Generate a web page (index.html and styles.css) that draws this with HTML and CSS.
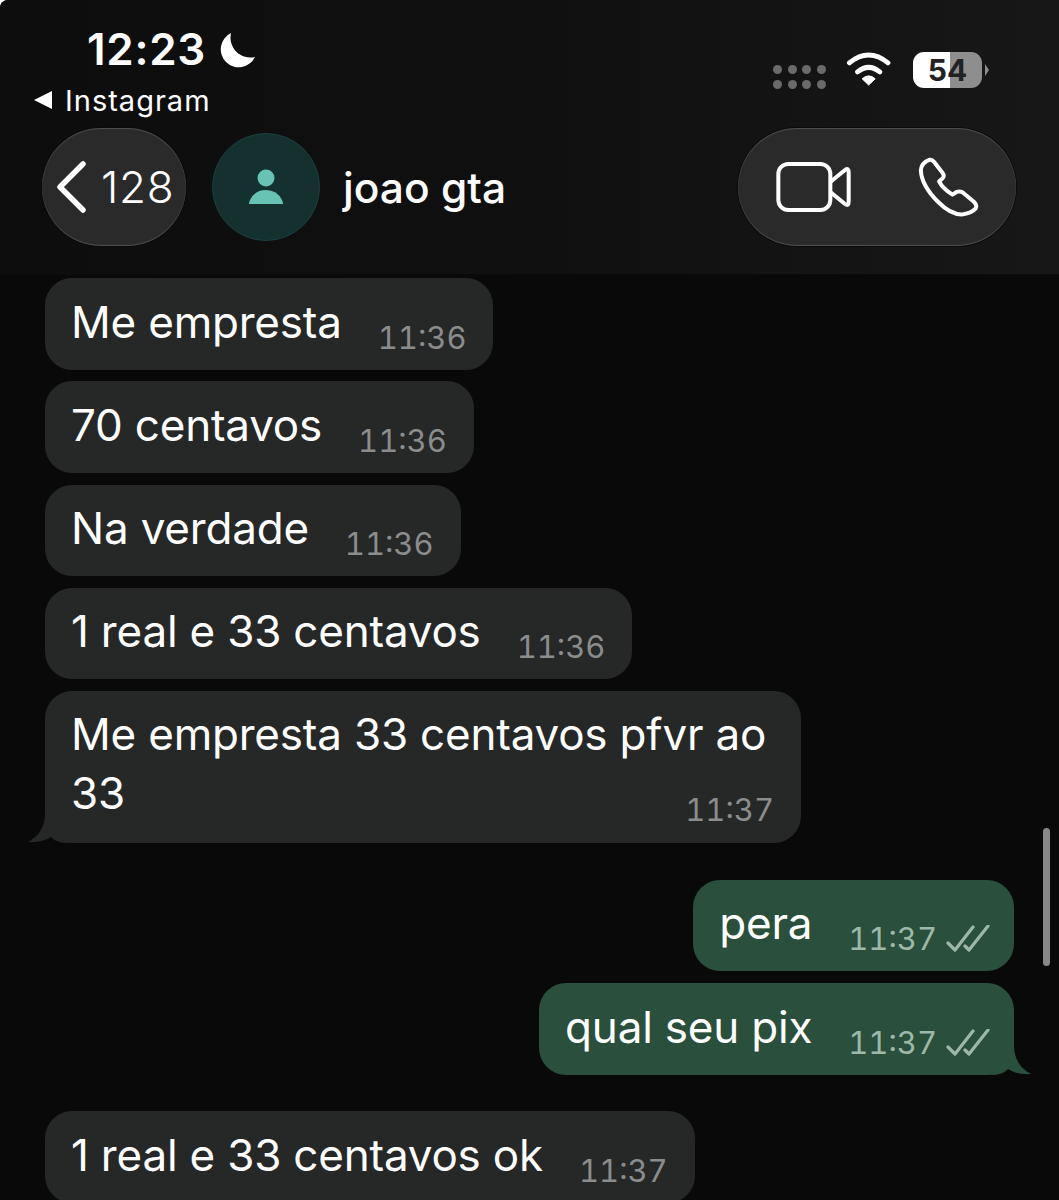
FILE: index.html
```html
<!DOCTYPE html>
<html>
<head>
    <meta charset="utf-8" />
    <meta name="viewport" content="width=device-width, initial-scale=1.0">
    <title>joao gta</title>
    <link rel="stylesheet" href="styles.css">
</head>
<body>
    <div class="screen">
        <div class="header">
            <div class="statusbar">
                <div class="status-left">
                    <div class="clock">
                        <span>12:23</span>
                        <svg class="moon" viewBox="0 0 37 36" width="37" height="36"><path d="M13 0A18 18 0 1 0 37 24A20 20 0 0 1 13 0Z" fill="#fff"/></svg>
                    </div>
                    <div class="back-app"><span class="back-arrow"></span>Instagram</div>
                </div>
                <div class="status-right">
                    <div class="signal">
                        <i></i><i></i><i></i><i></i><i></i><i></i><i></i><i></i>
                    </div>
                    <svg class="wifi" viewBox="380 70 140 104" width="46" height="34">
                        <path d="M390 103Q449 55 508 103M415 131Q449 103 483 131" fill="none" stroke="#fff" stroke-width="15" stroke-linecap="round"/>
                        <path d="M429 152Q449 134 469 152L449 171Z" fill="#fff" stroke="#fff" stroke-width="3" stroke-linejoin="round"/>
                    </svg>
                    <div class="battery"><span>54</span></div>
                    <span class="battery-tip"></span>
                </div>
            </div>
            <div class="nav">
                <div class="pill back-btn">
                    <svg viewBox="0 0 30 52" width="30" height="52"><path d="M27 3L4 26L27 49" fill="none" stroke="#fff" stroke-width="5.5" stroke-linecap="round" stroke-linejoin="round"/></svg>
                    <span>128</span>
                </div>
                <div class="avatar">
                    <svg viewBox="0 0 36 36" width="36" height="36">
                        <circle cx="18" cy="9" r="8.5" fill="#68c3b5"/>
                        <path d="M1 35Q1 33 2 31Q7 21 18 21Q29 21 34 31Q35 33 35 35Z" fill="#68c3b5"/>
                    </svg>
                </div>
                <div class="contact-name">joao gta</div>
                <div class="pill call-btn">
                    <svg viewBox="165 398 225 150" width="75" height="50">
                        <rect x="172" y="404" width="156" height="138" rx="30" fill="none" stroke="#fff" stroke-width="12"/>
                        <path d="M328 458L372 422Q383 414 383 428V518Q383 532 372 524L328 488" fill="none" stroke="#fff" stroke-width="12" stroke-linejoin="round"/>
                    </svg>
                    <svg viewBox="600 385 185 180" width="62" height="60">
                        <path d="M635 393Q642 392 648 400L674 434Q680 443 672 450L663 458Q672 478 703 498L715 490Q724 486 733 491L768 520Q778 530 772 540Q760 553 735 557Q700 560 660 520Q610 470 608 425Q610 402 635 393Z" fill="none" stroke="#fff" stroke-width="12" stroke-linejoin="round"/>
                    </svg>
                </div>
            </div>
        </div>

        <div class="chat">
            <div class="msg in">
                <span class="text">Me empresta</span>
                <span class="time">11:36</span>
            </div>
            <div class="msg in">
                <span class="text">70 centavos</span>
                <span class="time">11:36</span>
            </div>
            <div class="msg in">
                <span class="text">Na verdade</span>
                <span class="time">11:36</span>
            </div>
            <div class="msg in">
                <span class="text">1 real e 33 centavos</span>
                <span class="time">11:36</span>
            </div>
            <div class="msg in wrapped">
                <span class="text">Me empresta 33 centavos pfvr ao</span>
                <div class="last-line">
                    <span class="text">33</span>
                    <span class="time">11:37</span>
                </div>
                <svg class="tail tail-left" viewBox="0 0 40 50" width="40" height="50"><path d="M17 0V20Q17 40 0 49Q14 50 23 44Q28 50 40 50V0Z" fill="#262727"/></svg>
            </div>
            <div class="msg out first">
                <span class="text">pera</span>
                <span class="time">11:37</span>
                <svg class="check" viewBox="0 0 44 28" width="44" height="28"><path d="M2 18L9 25L27 2M19 21L23 25L42 1" fill="none" stroke="#9db8a9" stroke-width="3.2" stroke-linecap="round" stroke-linejoin="round"/></svg>
            </div>
            <div class="msg out">
                <span class="text">qual seu pix</span>
                <span class="time">11:37</span>
                <svg class="check" viewBox="0 0 44 28" width="44" height="28"><path d="M2 18L9 25L27 2M19 21L23 25L42 1" fill="none" stroke="#9db8a9" stroke-width="3.2" stroke-linecap="round" stroke-linejoin="round"/></svg>
                <svg class="tail tail-right" viewBox="0 0 40 50" width="40" height="50"><path d="M23 0V20Q23 40 40 49Q26 50 17 44Q12 50 0 50V0Z" fill="#2a4f3c"/></svg>
            </div>
            <div class="msg in first">
                <span class="text">1 real e 33 centavos ok</span>
                <span class="time">11:37</span>
            </div>
            <div class="scrollbar"></div>
        </div>
    </div>
</body>
</html>
```

FILE: styles.css
```css
html, body {
    margin: 0;
    padding: 0;
    height: 1200px;
    overflow: hidden;
    background: #fff;
}

body {
    font-family: Inter, "Liberation Sans", sans-serif;
    color: #fff;
}

.screen {
    height: 1200px;
    overflow: hidden;
    background: #090909;
    border-top-left-radius: 8px;
}

.header {
    height: 275px;
    background: linear-gradient(90deg, #0d0d0d 0%, #101010 50%, #171717 100%);
    border-bottom: 1px solid #0b0b0b;
    box-sizing: border-box;
}

.statusbar {
    display: flex;
    justify-content: space-between;
    height: 128px;
    padding: 0 70px 0 34px;
}

.status-left {
    padding-top: 22px;
}

.clock {
    display: flex;
    align-items: center;
    gap: 12px;
    height: 54px;
    margin-left: 53px;
    font-size: 44px;
    font-weight: 600;
    letter-spacing: 0.7px;
}

.moon {
    margin-top: 3px;
}

.back-app {
    display: flex;
    align-items: center;
    margin-top: 6px;
    height: 36px;
    font-size: 29px;
    font-weight: 400;
    letter-spacing: 1px;
}

.back-arrow {
    width: 0;
    height: 0;
    margin-right: 13px;
    border-top: 9px solid transparent;
    border-bottom: 9px solid transparent;
    border-right: 18px solid #fff;
}

.status-right {
    display: flex;
    align-items: flex-start;
    padding-top: 52px;
}

.signal {
    display: grid;
    grid-template-columns: repeat(4, 9px);
    gap: 6px 5.6px;
    margin: 13px 20px 0 0;
}

.signal i {
    width: 9px;
    height: 9px;
    border-radius: 50%;
    background: #6a6a6a;
}

.wifi {
    margin-right: 21px;
}

.battery {
    width: 69px;
    height: 36px;
    border-radius: 11px;
    background: linear-gradient(90deg, #fff 0%, #fff 54%, #8e8e8e 54%, #8e8e8e 100%);
    color: #222;
    font-size: 30px;
    font-weight: 700;
    line-height: 37px;
    text-align: center;
}

.battery-tip {
    width: 0;
    height: 0;
    margin: 12px 0 0 3px;
    border-top: 6px solid transparent;
    border-bottom: 6px solid transparent;
    border-left: 4px solid #8e8e8e;
}

.nav {
    display: flex;
    align-items: center;
    height: 118px;
    padding: 0 43px 0 42px;
}

.pill {
    display: flex;
    align-items: center;
    height: 118px;
    box-sizing: border-box;
    border-radius: 59px;
    background: #2a2a2a;
    box-shadow: inset 0 1px 1px rgba(255, 255, 255, 0.18), inset 0 -1px 1px rgba(255, 255, 255, 0.18), 0 0 0 1px #0b0b0b;
}

.back-btn {
    width: 144px;
    padding-left: 14px;
    gap: 15px;
    font-size: 44px;
    font-weight: 300;
    letter-spacing: 0.7px;
}

.avatar {
    display: flex;
    align-items: center;
    justify-content: center;
    width: 108px;
    height: 108px;
    margin-left: 26px;
    box-sizing: border-box;
    border: 1px solid #1f3f40;
    border-radius: 50%;
    background: #14302f;
}

.contact-name {
    flex: 1;
    margin-left: 23px;
    font-size: 42.5px;
    font-weight: 500;
}

.call-btn {
    width: 278px;
    padding: 0 36px 0 38px;
    justify-content: space-between;
}

.chat {
    position: relative;
    display: flex;
    flex-direction: column;
    padding: 3px 45px 0;
}

.msg {
    position: relative;
    display: flex;
    align-items: flex-end;
    box-sizing: border-box;
    min-height: 91.5px;
    margin-bottom: 11.75px;
    padding: 13.5px 27px 18px 26px;
    border-radius: 27px;
    font-size: 44px;
    letter-spacing: -0.2px;
    line-height: 59px;
}

.msg.in {
    align-self: flex-start;
    background: #262727;
}

.msg.out {
    align-self: flex-end;
    padding-right: 24px;
    background: #2a4f3c;
}

.msg.first {
    margin-top: 25px;
}

.time {
    flex: none;
    margin: 0 0 -4px 36px;
    font-size: 31px;
    font-variant-numeric: tabular-nums;
    letter-spacing: 0;
    line-height: 36px;
    color: #8b8c8c;
}

.out .time {
    color: #9db8a9;
}

.check {
    flex: none;
    margin: 0 0 0 9px;
}

.wrapped {
    flex-direction: column;
    align-items: stretch;
    width: 756px;
    padding-bottom: 20.5px;
}

.last-line {
    display: flex;
    justify-content: space-between;
    align-items: flex-end;
}

.wrapped .time {
    margin-bottom: -5.5px;
}

.tail {
    position: absolute;
    bottom: 0;
}

.tail-left {
    left: -17px;
}

.tail-right {
    right: -17px;
}

.scrollbar {
    position: absolute;
    top: 553px;
    right: 9px;
    width: 7px;
    height: 138px;
    border-radius: 4px;
    background: #888;
}
```
